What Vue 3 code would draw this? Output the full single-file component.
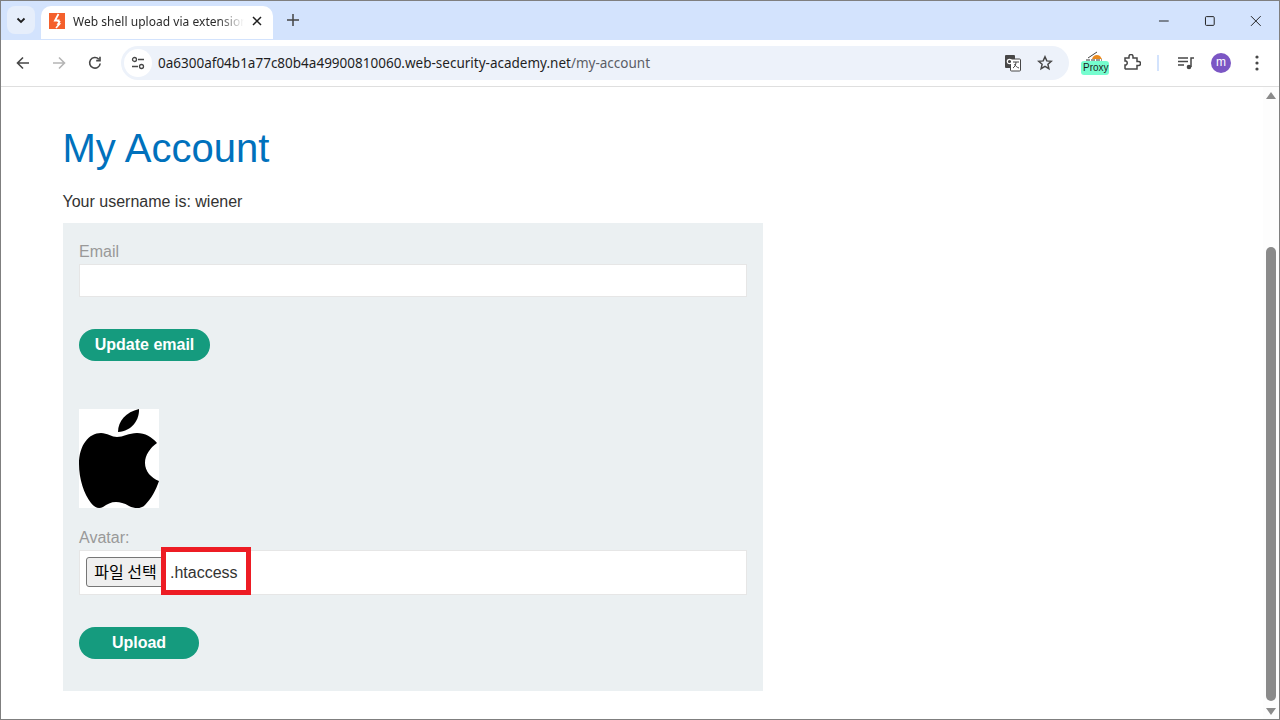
<script setup>
</script>

<template>
  <div class="window">
    <div class="tabstrip">
      <div class="tabsearch">
        <svg width="12" height="12" viewBox="0 0 12 12"><path d="M2.5 4.5 6 8l3.5-3.5" fill="none" stroke="#1f1f1f" stroke-width="1.8"/></svg>
      </div>
      <div class="tab">
        <svg class="favicon" width="16" height="16" viewBox="0 0 16 16">
          <rect width="16" height="16" fill="#f4602c"/>
          <path d="M9.500 1 6 7.500h3.500L9 9" fill="none" stroke="#fff" stroke-width="1.800"/>
          <path d="M11 8 9 11h1.500L7 15" fill="none" stroke="#fff" stroke-width="1.600"/>
        </svg>
        <span class="tabtitle">Web shell upload via extension blacklist bypass</span>
        <svg class="tabclose" width="10" height="10" viewBox="0 0 10 10"><path d="M1 1l8 8M9 1l-8 8" stroke="#1f1f1f" stroke-width="1.5"/></svg>
      </div>
      <svg class="newtab" width="12" height="12" viewBox="0 0 12 12"><path d="M6 0v12M0 6h12" stroke="#444" stroke-width="1.5"/></svg>
      <div class="spacer"></div>
      <div class="winbtns">
        <svg width="12" height="12" viewBox="0 0 12 12"><path d="M1 6h10" stroke="#1f1f1f" stroke-width="1"/></svg>
        <svg width="12" height="12" viewBox="0 0 12 12"><rect x="1.500" y="1.500" width="9" height="9" rx="1" fill="none" stroke="#1f1f1f"/></svg>
        <svg width="12" height="12" viewBox="0 0 12 12"><path d="M1 1l10 10M11 1 1 11" stroke="#1f1f1f"/></svg>
      </div>
    </div>

    <div class="toolbar">
      <svg class="nav" width="16" height="16" viewBox="0 0 16 16"><path d="M14 8H3M8 2.500 2.500 8 8 13.500" fill="none" stroke="#474747" stroke-width="1.600"/></svg>
      <svg class="nav" width="16" height="16" viewBox="0 0 16 16"><path d="M2 8h11M8 2.500 13.500 8 8 13.500" fill="none" stroke="#b5b5b5" stroke-width="1.600"/></svg>
      <svg class="nav" width="16" height="16" viewBox="0 0 16 16"><path d="M13.200 8.500A5.300 5.300 0 1 1 11.800 4.200M13 1.800v3.800H9.200" fill="none" stroke="#474747" stroke-width="1.600"/></svg>
      <div class="omnibox">
        <div class="siteinfo">
          <svg width="14" height="14" viewBox="0 0 14 14">
            <circle cx="3.500" cy="3.500" r="2" fill="none" stroke="#474747" stroke-width="1.300"/>
            <path d="M7 3.500h6M1 10.500h6" stroke="#474747" stroke-width="1.300"/>
            <circle cx="10.500" cy="10.500" r="2" fill="none" stroke="#474747" stroke-width="1.300"/>
          </svg>
        </div>
        <span class="url"><span class="host">0a6300af04b1a77c80b4a49900810060.web-security-academy.net</span>/my-account</span>
        <div class="spacer"></div>
        <svg class="translate" width="18" height="18" viewBox="0 0 18 18">
          <rect x="1" y="1" width="10" height="13" rx="1" fill="#474747"/>
          <rect x="6.500" y="5" width="10" height="12" rx="1" fill="#fff" stroke="#474747"/>
          <circle cx="5.500" cy="7.500" r="2.200" fill="none" stroke="#fff" stroke-width="1.200"/>
          <path d="M9 8h6M12 8c0 3-1.500 5-3 6M10.500 10c1 2 2.500 3.500 4.500 4" fill="none" stroke="#474747"/>
        </svg>
        <svg class="star" width="16" height="16" viewBox="0 0 16 16"><path d="M8 1.800l1.800 4.100 4.500.4-3.400 3 1 4.400L8 11.400l-3.900 2.300 1-4.400-3.400-3 4.500-.4z" fill="none" stroke="#474747" stroke-width="1.500"/></svg>
      </div>
      <div class="proxy">
        <svg class="fox" width="18" height="10" viewBox="0 0 18 10">
          <path d="M2 7 11 1" stroke="#444" stroke-width="1"/>
          <path d="M6 8c1-4 5-5 8-3l2 3z" fill="#ea8a1e"/>
          <path d="M0 9h16" stroke="#333" stroke-width="1" stroke-dasharray="4 1"/>
        </svg>
        <span class="proxylabel"><span>Proxy</span></span>
      </div>
      <svg class="ext" width="18" height="18" viewBox="0 0 18 18"><path d="M2 5h4V3.500a2 2 0 0 1 4 0V5h4v3.500h1.500a2 2 0 0 1 0 4H14V16H2.500L2 15.500V12h1a2.200 2.200 0 0 0 0-4H2z" fill="none" stroke="#474747" stroke-width="1.500" transform="translate(0 -1)"/></svg>
      <div class="divider"></div>
      <svg class="media" width="18" height="14" viewBox="0 0 18 14">
        <path d="M1 2h10M1 5.500h10M1 9h6" stroke="#474747" stroke-width="1.400"/>
        <circle cx="12" cy="11" r="2.300" fill="#474747"/>
        <path d="M14 11V2h3" fill="none" stroke="#474747" stroke-width="1.500"/>
      </svg>
      <div class="avatar">m</div>
      <svg class="kebab" width="4" height="16" viewBox="0 0 4 16"><circle cx="2" cy="2" r="1.600" fill="#474747"/><circle cx="2" cy="8" r="1.600" fill="#474747"/><circle cx="2" cy="14" r="1.600" fill="#474747"/></svg>
    </div>

    <div class="content">
      <div class="page">
        <h1>My Account</h1>
        <p class="username">Your username is: wiener</p>
        <div class="panel">
          <label class="lab">Email</label>
          <div class="input"></div>
          <button class="btn email-btn">Update email</button>
          <svg class="apple" width="80" height="99" viewBox="0 0 80 99">
            <rect width="80" height="99" fill="#fff"/>
            <g class="apple-shape">
              <path d="M39 23C39 12 47 3 60 0c.5 11-7 22-21 23z" fill="#000"/>
              <path d="M38 28C44 28 50 24 58 24C66 24 73 28 78 34C71 39 66 46 66 54C66 62 72 69 80 72C77 81 72 90 66 96C62 100 56 100 50 97C45 94 41 93 37 93C32 93 28 95 24 98C20 100 16 99 12 94C5 85 0 70 0 55C0 36 10 24 22 24C28 24 33 28 38 28z" fill="#000"/>
            </g>
          </svg>
          <label class="lab avatar-lab">Avatar:</label>
          <div class="file">
            <span class="filebtn">파일 선택</span>
            <span class="filename">.htaccess</span>
            <div class="redbox"></div>
          </div>
          <button class="btn upload-btn">Upload</button>
        </div>
      </div>
      <div class="scrollbar">
        <svg width="10" height="7" viewBox="0 0 10 7"><path d="M5 0l5 7H0z" fill="#8a8a8a"/></svg>
        <div class="thumb"></div>
        <svg width="10" height="7" viewBox="0 0 10 7"><path d="M0 0h10L5 7z" fill="#8a8a8a"/></svg>
      </div>
    </div>
  </div>
</template>

<style scoped>
.window {
  width: 1280px;
  height: 720px;
  box-sizing: border-box;
  border: 1px solid #7f7f7f;
  display: flex;
  flex-direction: column;
  overflow: hidden;
  background: #fff;
  font-family: "Liberation Sans", Arial, sans-serif;
}
.spacer { flex: 1; }

.tabstrip {
  height: 39px;
  flex: none;
  background: #d3e3fd;
  display: flex;
  align-items: flex-start;
}
.tabsearch {
  width: 28px;
  height: 28px;
  margin: 5px 0 0 6px;
  border-radius: 8px;
  background: #e6eefb;
  display: flex;
  align-items: center;
  justify-content: center;
}
.tab {
  width: 232px;
  height: 33px;
  margin: 5px 0 0 6px;
  box-sizing: border-box;
  padding: 0 11px 0 8px;
  background: #fff;
  border-radius: 10px 10px 0 0;
  display: flex;
  align-items: center;
}
.favicon { flex: none; margin-top: -4px; }
.tabtitle {
  flex: 1;
  min-width: 0;
  margin: -3px 8px 0 8px;
  font-family: "Noto Sans", "Open Sans", sans-serif;
  font-size: 12px;
  letter-spacing: 0.03px;
  color: #2b2b2b;
  white-space: nowrap;
  overflow: hidden;
  -webkit-mask-image: linear-gradient(to right, #000 85%, transparent);
  mask-image: linear-gradient(to right, #000 85%, transparent);
}
.tabclose { flex: none; margin-top: -4px; }
.newtab { margin: 13px 0 0 14px; flex: none; }
.winbtns {
  display: flex;
  gap: 34px;
  margin: 14px 17px 0 0;
  width: 104px;
}
.winbtns svg:last-child { margin-left: 1px; }

.toolbar {
  height: 47px;
  flex: none;
  box-sizing: border-box;
  background: #fff;
  border-bottom: 1px solid #dfdfdf;
  border-radius: 10px 10px 0 0;
  display: flex;
  align-items: center;
  padding: 0 14px 1px 14px;
}
.nav { flex: none; margin-right: 20px; }
.nav:nth-child(3) { margin-right: 18px; }
.omnibox {
  width: 948px;
  height: 34px;
  flex: none;
  box-sizing: border-box;
  background: #edf2fa;
  border-radius: 17px;
  display: flex;
  align-items: center;
  padding: 0 16px 0 3px;
}
.siteinfo {
  width: 28px;
  height: 28px;
  border-radius: 50%;
  background: #fff;
  display: flex;
  align-items: center;
  justify-content: center;
  margin-right: 6px;
}
.url {
  font-family: "Noto Sans", "Open Sans", sans-serif;
  font-size: 13.5px;
  color: #5b5e66;
  white-space: nowrap;
}
.host { color: #1f1f1f; }
.translate { margin-right: 15px; }
.proxy {
  width: 28px;
  height: 26px;
  margin-left: 12px;
  flex: none;
  display: flex;
  flex-direction: column;
  align-items: center;
}
.fox { flex: none; margin-top: 1px; }
.proxylabel {
  width: 28px;
  height: 14px;
  background: #76fdcf;
  border-radius: 3px;
  overflow: hidden;
  font-size: 10px;
  line-height: 14px;
  color: #1f1f1f;
  padding-left: 2px;
  box-sizing: border-box;
  white-space: nowrap;
}
.ext { margin-left: 14px; flex: none; }
.divider {
  width: 2px;
  height: 16px;
  background: #d3e3fd;
  margin-left: 16px;
  flex: none;
}
.media { margin-left: 18px; flex: none; }
.avatar {
  width: 20px;
  height: 20px;
  margin-left: 16px;
  border-radius: 50%;
  background: #7b56c4;
  color: #fff;
  font-size: 12px;
  line-height: 19px;
  text-align: center;
  flex: none;
}
.kebab { margin-left: 24px; flex: none; }

.content {
  flex: 1;
  min-height: 0;
  display: flex;
}
.page {
  flex: 1;
  min-width: 0;
  padding-left: 62px;
}
h1 {
  margin: 38px 0 0 -0.5px;
  font-size: 40px;
  line-height: 46px;
  font-weight: 400;
  color: #0071bc;
}
.username {
  margin: 22px 0 0 -0.5px;
  font-size: 16px;
  line-height: 18px;
  color: #333332;
}
.panel {
  width: 700px;
  height: 468px;
  margin-top: 12px;
  box-sizing: border-box;
  padding: 20px 16px 0;
  background: #ebf0f2;
  display: flex;
  flex-direction: column;
  align-items: flex-start;
}
.lab {
  font-size: 16px;
  line-height: 18px;
  margin-bottom: 3px;
  color: #999;
}
.input {
  width: 668px;
  height: 33px;
  box-sizing: border-box;
  background: #fff;
  border: 1px solid #e6e6e6;
}
.btn {
  display: block;
  height: 32px;
  padding: 0;
  border: 0;
  border-radius: 16px;
  background: #159b7e;
  color: #fff;
  font-family: inherit;
  font-size: 16px;
  font-weight: 700;
  line-height: 30px;
}
.email-btn { width: 131px; margin-top: 32px; }
.apple { display: block; margin-top: 48px; }
.apple-shape { filter: blur(0.5px); }
.avatar-lab { margin-top: 21px; margin-bottom: 3px; }
.file {
  position: relative;
  width: 668px;
  height: 45px;
  box-sizing: border-box;
  background: #fff;
  border: 1px solid #e6e6e6;
  padding-left: 6px;
  display: flex;
  align-items: center;
}
.filebtn {
  width: 79px;
  height: 30px;
  margin-top: -1px;
  flex: none;
  box-sizing: border-box;
  background: #efefef;
  border: 1px solid #767676;
  border-radius: 3px;
  font-family: "Noto Sans CJK KR", sans-serif;
  font-size: 16px;
  line-height: 27px;
  text-align: center;
  color: #000;
  white-space: nowrap;
}
.filename {
  margin: 1px 0 0 5px;
  font-size: 16px;
  color: #333332;
}
.redbox {
  position: absolute;
  left: 81px;
  top: -4px;
  width: 90px;
  height: 48px;
  box-sizing: border-box;
  border: 5px solid #ed1c24;
}
.upload-btn { width: 120px; margin-top: 32px; }

.scrollbar {
  width: 16px;
  flex: none;
  background: #fdfdfd;
  display: flex;
  flex-direction: column;
  align-items: center;
  padding: 5px 0 0;
  box-sizing: border-box;
}
.thumb {
  width: 10px;
  flex: none;
  height: 454px;
  margin: 148px 0 7px;
  background: #8a8a8a;
  border-radius: 5px;
}
</style>

<style>
html, body { margin: 0; padding: 0; background: #fff; }
</style>
